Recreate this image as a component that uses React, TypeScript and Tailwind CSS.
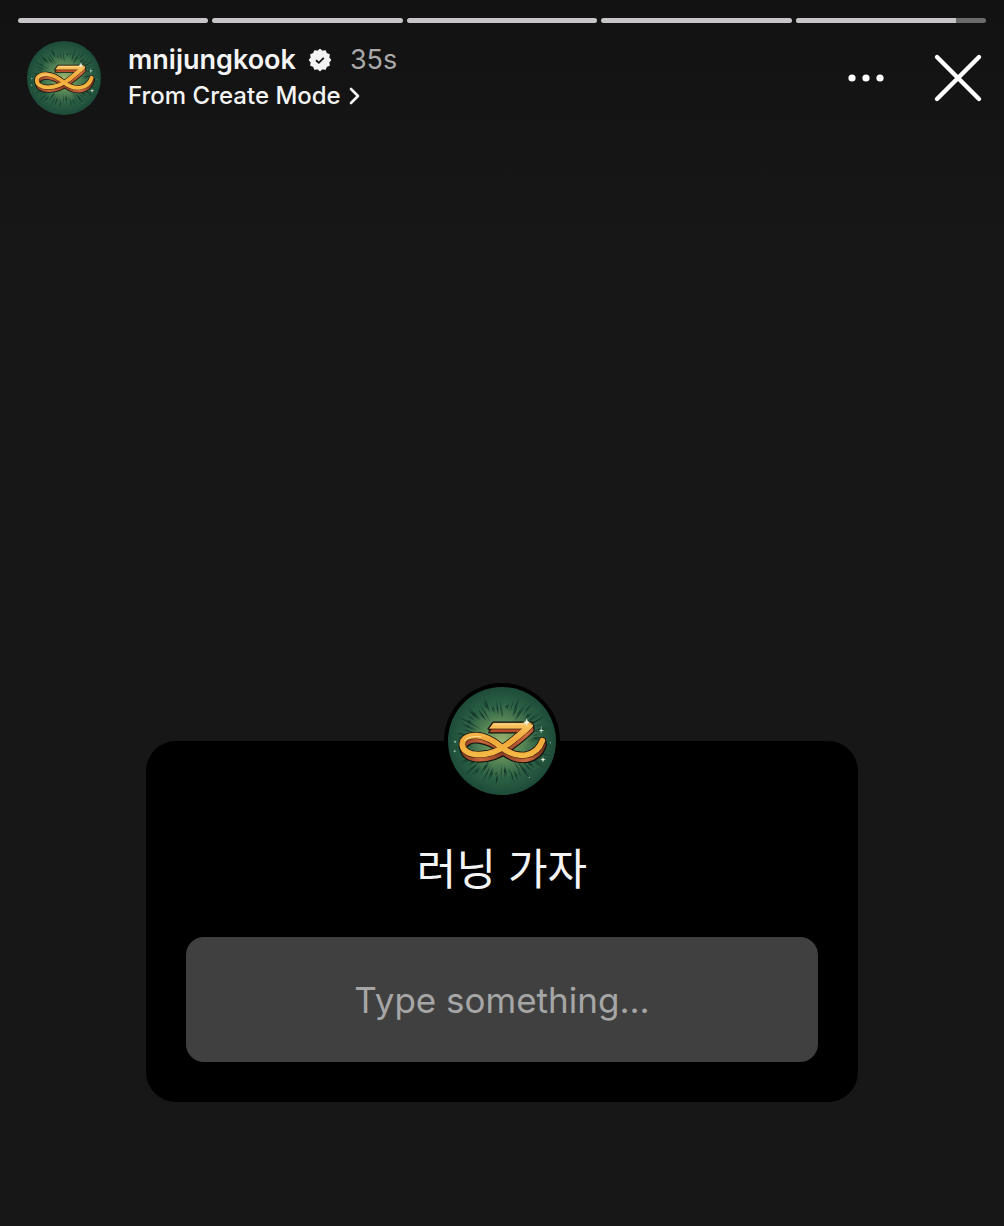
import { useId, useState } from "react";

const segments = [100, 100, 100, 100, 84];

// Comic burst behind the emblem, longer towards the diagonals
const rays = Array.from({ length: 84 }, (_, i) => {
  const angle = (i / 84) * Math.PI * 2 + ((i * 7) % 5) * 0.012;
  const reach = 1 + 0.14 * Math.abs(Math.sin(angle * 2));
  const inner = 74 + ((i * 13) % 7) * 6;
  const outer = (108 + ((i * 11) % 9) * 4) * reach;
  const half = 0.011 + ((i * 5) % 3) * 0.005;
  const middle = (inner + outer) / 2;
  const point = (a: number, r: number) =>
    `${(216 + Math.cos(a) * r).toFixed(1)},${(214 + Math.sin(a) * r * 0.9).toFixed(1)}`;
  return `M${point(angle, inner)}L${point(angle + half, middle)}L${point(angle, outer)}L${point(angle - half, middle)}Z`;
}).join("");

const ribbon =
  "M300 168 C284 184 262 202 238 220 C210 243 178 255 146 255 C116 255 96 242 97 223 C98 205 118 196 142 198 C170 200 194 216 214 232 C238 252 262 260 288 256 C314 251 330 234 337 213";
const topBar = "M190 159 H307 L294 178 H176 Z";

function Emblem({ className }: { className: string }) {
  const id = useId();
  return (
    <svg viewBox="54 52 324 324" className={className} aria-hidden="true">
      <defs>
        <radialGradient id={`${id}bg`}>
          <stop offset="0" stopColor="#9bb36e" />
          <stop offset="0.35" stopColor="#5c8a58" />
          <stop offset="0.7" stopColor="#2b6044" />
          <stop offset="1" stopColor="#1d4b39" />
        </radialGradient>
        <linearGradient id={`${id}gold`} x1="0" y1="156" x2="0" y2="270" gradientUnits="userSpaceOnUse">
          <stop offset="0" stopColor="#fbc765" />
          <stop offset="0.5" stopColor="#f0a93a" />
          <stop offset="1" stopColor="#f6bd48" />
        </linearGradient>
        <linearGradient id={`${id}side`} x1="90" y1="0" x2="340" y2="0" gradientUnits="userSpaceOnUse">
          <stop offset="0" stopColor="#8a3a22" />
          <stop offset="0.25" stopColor="#c9653a" />
          <stop offset="0.5" stopColor="#8f3f24" />
          <stop offset="0.8" stopColor="#cf6a3e" />
          <stop offset="1" stopColor="#7c321e" />
        </linearGradient>
      </defs>
      <circle cx="216" cy="214" r="162" fill={`url(#${id}bg)`} />
      <path d={rays} fill="#14382b" />
      <g fill="none" strokeLinecap="round" strokeLinejoin="round">
        <g stroke="#101511" strokeWidth="22">
          <path d={ribbon} transform="translate(3 13)" />
          <path d={ribbon} transform="translate(2 7)" />
          <path d={ribbon} />
          <path d={topBar} strokeWidth="7" />
          <path d={topBar} strokeWidth="7" transform="translate(2 10)" />
        </g>
        <g stroke={`url(#${id}side)`} strokeWidth="15">
          <path d={ribbon} transform="translate(3 13)" />
          <path d={ribbon} transform="translate(2 8)" />
        </g>
        <path d={topBar} fill="#b84f2a" transform="translate(2 10)" />
        <path d={ribbon} stroke="#33180e" strokeWidth="20" />
        <path d={ribbon} stroke={`url(#${id}gold)`} strokeWidth="17" />
        <path d={topBar} fill={`url(#${id}gold)`} stroke="#33180e" strokeWidth="2" />
        <path d="M296 171 C282 184 262 202 238 220" stroke={`url(#${id}gold)`} strokeWidth="17" />
        <path d="M194 163 H288 M103 213 C112 203 132 198 152 201" stroke="#ffe09a" strokeWidth="3" />
      </g>
      <path
        d="M290 146 L293 155 L301 158 L293 161 L290 170 L287 161 L279 158 L287 155Z M339 262 L341 268 L347 270 L341 272 L339 278 L337 272 L331 270 L337 268Z"
        fill="#f3f4dc"
      />
      <path d="M334 168 L335 180 L343 182 L335 185 L333 193 L332 185 L326 182 L332 180Z" fill="#b9dcc2" />
      <g fill="#8fc4a9">
        <circle cx="75" cy="216" r="3" />
        <circle cx="74" cy="245" r="3" />
        <circle cx="298" cy="323" r="2" />
        <circle cx="361" cy="219" r="2" />
      </g>
    </svg>
  );
}

const badgePoints = Array.from({ length: 24 }, (_, i) => {
  const angle = (i / 24) * Math.PI * 2;
  const r = i % 2 === 0 ? 10.4 : 8.8;
  return `${(12 + Math.cos(angle) * r).toFixed(2)},${(12 + Math.sin(angle) * r).toFixed(2)}`;
}).join(" ");

function VerifiedBadge() {
  return (
    <svg viewBox="0 0 24 24" className="size-6 shrink-0" role="img" aria-label="Verified">
      <polygon points={badgePoints} fill="#f4f4f4" stroke="#f4f4f4" strokeWidth="1.6" strokeLinejoin="round" />
      <path d="M8 12.2 L10.8 14.8 L15.8 9.8" fill="none" stroke="#151515" strokeWidth="1.9" />
    </svg>
  );
}

export default function App() {
  const [answer, setAnswer] = useState("");

  return (
    <main className="flex min-h-screen flex-col bg-[#161616] bg-linear-to-b from-[#121212] to-[#171717] to-20% font-['Inter','Noto_Sans_CJK_KR',sans-serif] text-[#f4f4f4]">
      <div className="flex gap-1 px-[18px] pt-[18px]">
        {segments.map((progress, i) => (
          <div key={i} className="h-[5px] flex-1 overflow-hidden rounded-sm bg-[#6b6b6b]">
            <div className="h-full bg-[#c8c5c8]" style={{ width: `${progress}%` }} />
          </div>
        ))}
      </div>

      <header className="flex items-center pt-[18px] pr-[21px] pl-[27px]">
        <Emblem className="size-[74px] shrink-0" />
        <div className="ml-[27px] flex min-w-0 flex-1 flex-col">
          <div className="flex items-center">
            <a href="#profile" className="text-[27px] leading-9 font-semibold">
              mnijungkook
            </a>
            <span className="mr-[18px] ml-3 flex">
              <VerifiedBadge />
            </span>
            <time className="text-[27px] leading-9 text-[#a9a9a9]">35s</time>
          </div>
          <a href="#create" className="flex items-center gap-2 text-2xl leading-9 font-medium">
            From Create Mode
            <svg viewBox="0 0 12 18" className="h-[18px] w-3" aria-hidden="true">
              <path d="M2 2 L9 9 L2 16" fill="none" stroke="currentColor" strokeWidth="2.6" strokeLinecap="round" strokeLinejoin="round" />
            </svg>
          </a>
        </div>
        <button type="button" aria-label="More options" className="mr-12">
          <svg viewBox="0 0 38 12" className="h-3 w-[38px]" fill="#ffffff">
            <circle cx="5" cy="6" r="3.6" />
            <circle cx="19" cy="6" r="3.6" />
            <circle cx="33" cy="6" r="3.6" />
          </svg>
        </button>
        <button type="button" aria-label="Close">
          <svg viewBox="0 0 50 50" className="size-[50px]">
            <path d="M4 4 L46 46 M46 4 L4 46" stroke="#ffffff" strokeWidth="4.4" strokeLinecap="round" />
          </svg>
        </button>
      </header>

      <section className="mx-auto mt-auto mb-[124px] flex w-full max-w-[712px] flex-col items-center rounded-[30px] bg-black px-10 pb-10">
        <div className="-mt-[58px] rounded-full bg-black p-1">
          <Emblem className="size-[108px]" />
        </div>
        <label htmlFor="answer" className="mt-[38px] text-[43px] leading-[64px]">
          러닝 가자
        </label>
        <input
          id="answer"
          type="text"
          value={answer}
          onChange={(e) => setAnswer(e.target.value)}
          placeholder="Type something..."
          className="mt-9 h-[125px] w-full rounded-[18px] bg-[#404040] px-6 text-center text-[35px] outline-none placeholder:text-[#a6a6a6]"
        />
      </section>
    </main>
  );
}
